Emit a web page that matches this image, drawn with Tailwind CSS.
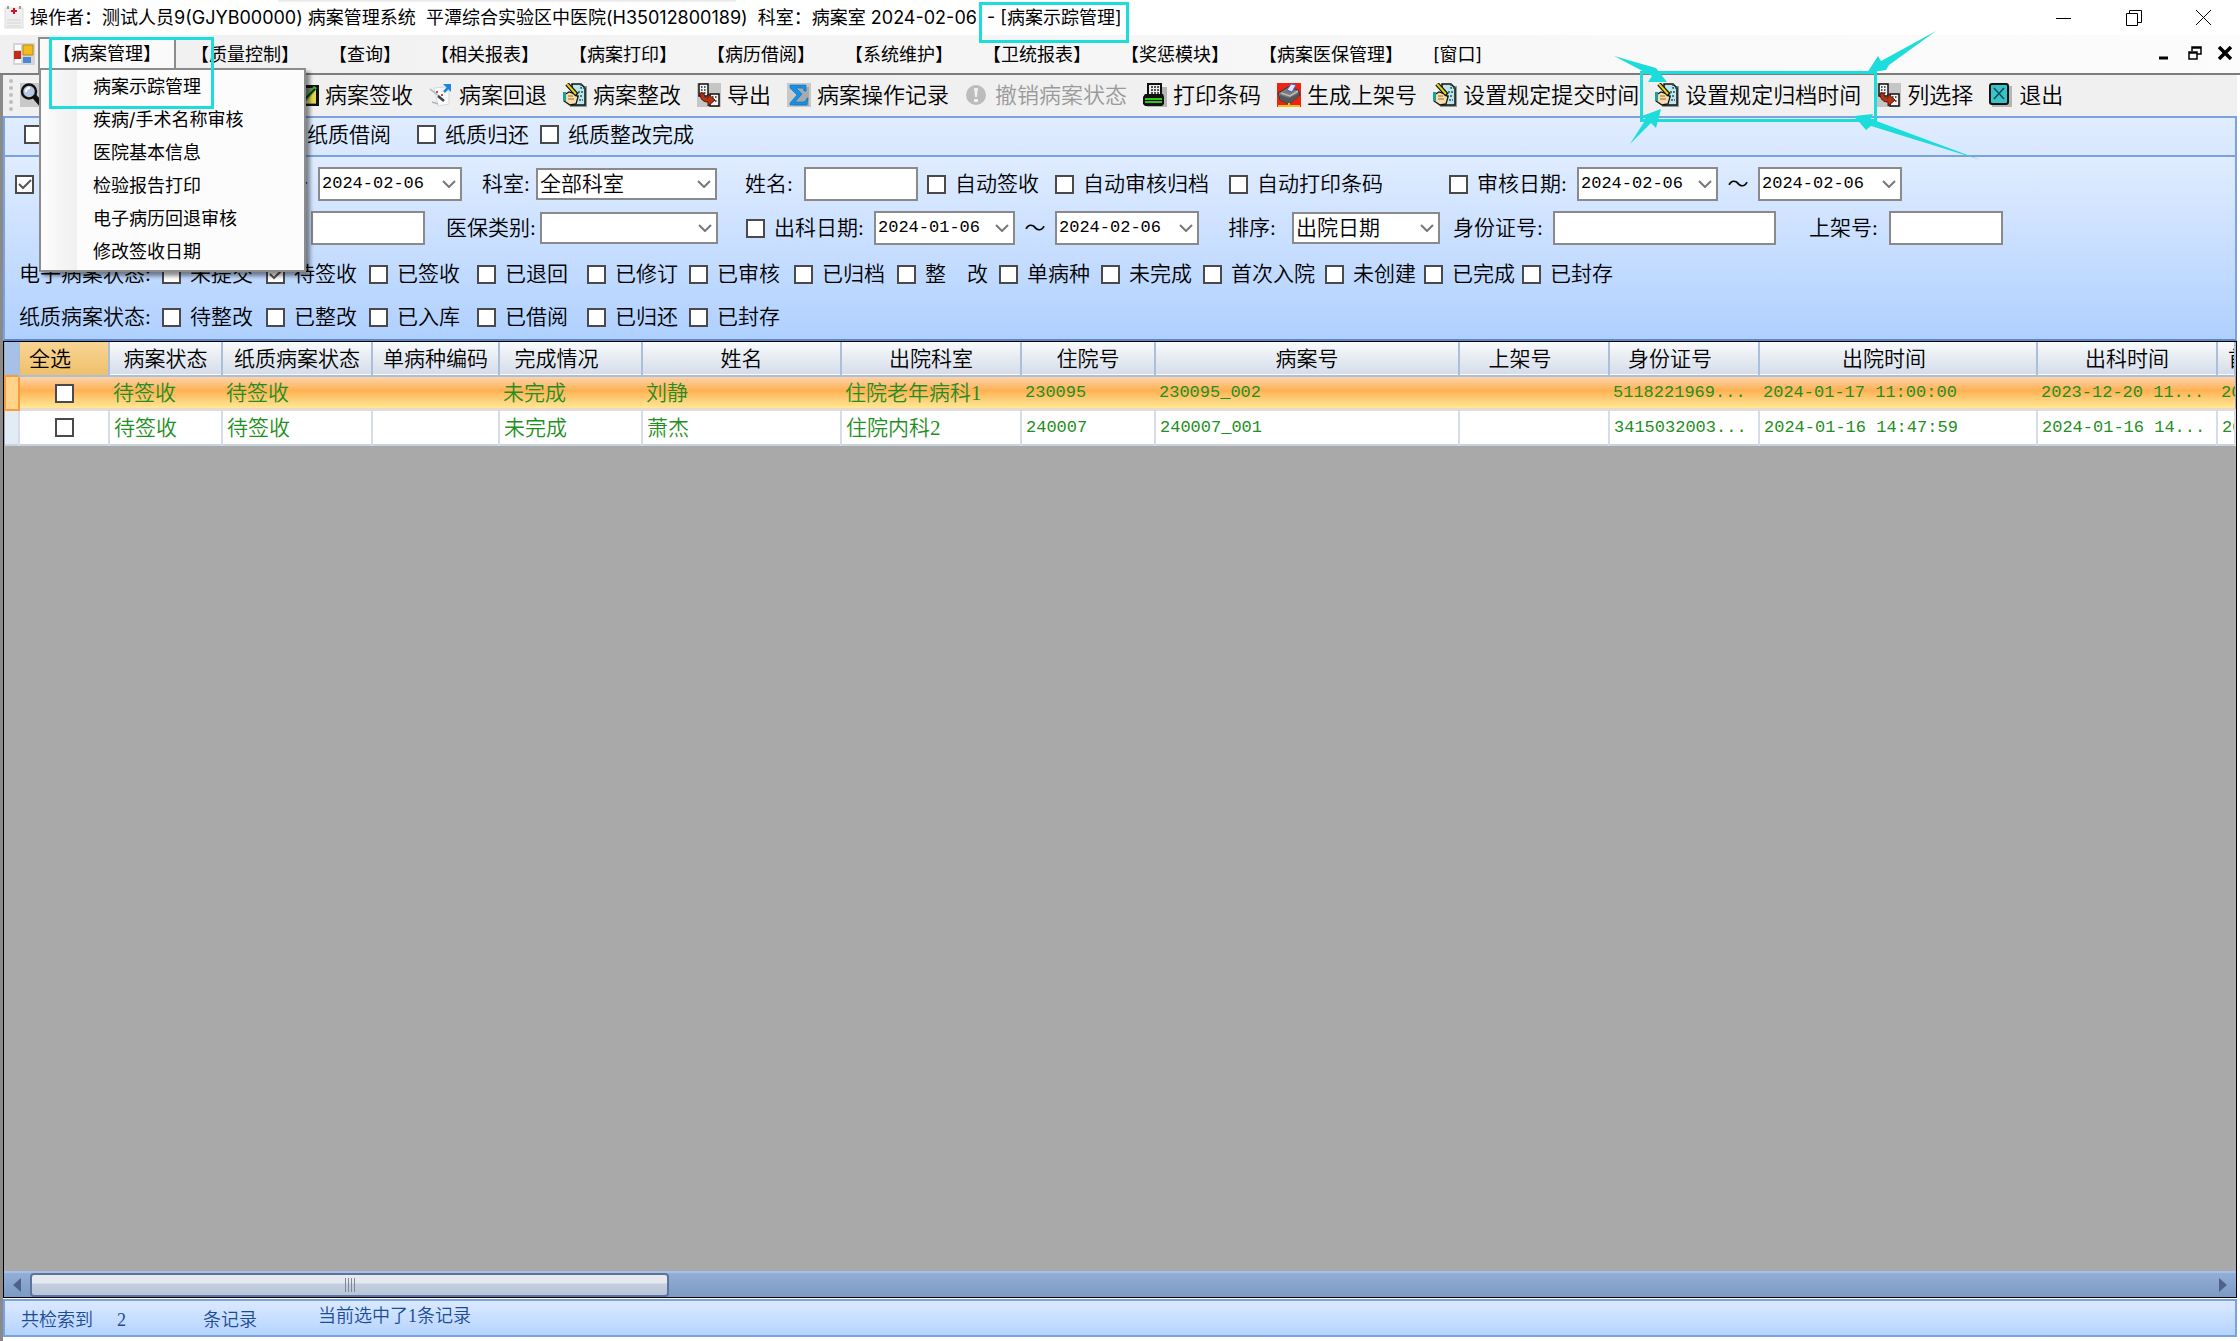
<!DOCTYPE html>
<html lang="zh-CN">
<head>
<meta charset="utf-8">
<title>病案管理系统</title>
<script src="https://cdn.jsdelivr.net/npm/@tailwindcss/browser@4"></script>
</head>
<body class="relative flex min-h-screen flex-col overflow-hidden bg-white font-['Inter','Noto_Sans_CJK_SC',sans-serif] text-lg leading-6 text-black">

<svg class="hidden">
  <symbol id="i-search" viewBox="0 0 24 24"><path fill="#c8c8c8" d="M0 0h24v24H0z"/><path stroke="#111" stroke-width="5" stroke-linecap="round" d="M14 13l7 8"/><circle cx="9" cy="8.500" r="7" fill="#b8c8e4" stroke="#111" stroke-width="2.500"/><path d="M6 9c0-3 2-4 4-4" fill="none" stroke="#fff" stroke-width="2"/></symbol>
  <symbol id="i-sign" viewBox="0 0 24 24"><path fill="#111" d="M1 2h23v21H1z"/><path fill="#8a8a6a" d="M3 5h18v16H3z"/><path fill="#e6d84a" d="M10 20 21 7v13z"/><path fill="#3fa63a" d="M9 14 19 3l3 2-11 13z"/><path d="M8 18 20 6" fill="none" stroke="#111" stroke-width="1.5"/></symbol>
  <symbol id="i-return" viewBox="0 0 24 24"><path fill="#f8fafc" stroke="#d5d9e0" d="M5 5l11-1 4 4v13l-11 2z"/><path d="M1 6l9 7M3 19l6 2" stroke="#b5b5b5" stroke-width="1.5"/><path fill="#d44" d="M7 8h2v2H7zM12 11h2v2h-2z"/><path d="M15 9l4-4" stroke="#1d86e0" stroke-width="2.500"/><path fill="#1d86e0" d="M14 1h8v8z"/><path d="M9 13l6 5" stroke="#444" stroke-width="2.500"/></symbol>
  <symbol id="i-edit" viewBox="0 0 24 24"><path fill="#8d9b9b" d="M11 3h13v21H7v-5z"/><path fill="#bfe6ec" stroke="#111" stroke-width="1.5" d="M9 1h9l4 4v17H9z"/><path d="M18 1v4h4M15 9h5M14 13h6M16 17h4" fill="none" stroke="#1b5c60" stroke-width="1.5" stroke-dasharray="2 1"/><path fill="#f6dcae" stroke="#111" stroke-width="1.3" d="M1 12l5-3 6 2 3 3-2 7-6 1-6-4z"/><path d="M5 13h5M5 16h6" stroke="#a06a20"/><path d="M4 1l10 11" stroke="#111" stroke-width="4.5"/><path d="M4 1l9 10" stroke="#e6d21c" stroke-width="2"/><path fill="#18a2a0" d="M0 9h3v9H0z"/></symbol>
  <symbol id="i-export" viewBox="0 0 24 24"><path fill="#c6c6c6" d="M0 0h24v24H0z"/><path fill="#f4f4f4" stroke="#111" stroke-width="1.5" d="M2 1h9v12H2zM13 11h9v12h-9z"/><path stroke="#222" stroke-dasharray="1.5 1.5" stroke-width="1.5" d="M4 4h6M4 7h6M4 10h6M15 14h6M18 18h3"/><path fill="#b8300f" stroke="#4a1608" d="M3 10c0 7 4 9 8 9v4l7-6-7-6v4c-3 0-4-2-4-5z"/></symbol>
  <symbol id="i-sigma" viewBox="0 0 24 24"><path fill="#c8c8c8" d="M0 0h24v24H0z"/><path fill="#858b90" d="M5 4h17v19H6l6-9z" opacity=".5"/><path fill="#1590e6" stroke="#0d6cb8" stroke-width=".6" d="M3 2h16v6h-2c0-2-1-3-3-3H9l6 6-7 8h7c3 0 4-1 5-4h1l-1 7H3v-2l7-8-7-7z"/></symbol>
  <symbol id="i-undo" viewBox="0 0 24 24"><circle cx="11" cy="12" r="10" fill="#bcbcbc"/><path fill="#f0f0f0" d="M9 5h4l-1 9h-2zM9 16h4v3H9z"/></symbol>
  <symbol id="i-print" viewBox="0 0 24 24"><path fill="#b5b5b5" d="M4 4h20v20H4z"/><path fill="#eee" stroke="#111" stroke-width="2" d="M5 1h13v12H5z"/><path d="M8 4h8M8 7h8M8 10h8" stroke="#222" stroke-width="1.5" stroke-dasharray="2 1"/><path fill="#111" d="M2 11h18l1 3v7l-2 2H2l-2-2v-7z"/><path fill="#35c020" d="M2 15h17v2H2zM2 18h17v2H2z"/></symbol>
  <symbol id="i-shelf" viewBox="0 0 24 24"><path fill="#ee2412" d="M0 0h24v24H0z"/><path fill="#77797b" stroke="#333" d="M1 10l10-6 10 3 2 5-11 9-9-4z"/><path fill="#55585a" d="M3 12l9 3 10-5v3l-10 8-9-4z"/><path d="M4 10l9 3 8-5" fill="none" stroke="#bbb" stroke-width="1.500"/><path fill="#dfe6ff" stroke="#5560b0" d="M10 7l4-6 5 1-4 7z"/><path d="M1 23h22M12 20v3" stroke="#e9c21a" stroke-width="2"/></symbol>
  <symbol id="i-exit" viewBox="0 0 24 24"><path fill="#b5b5b5" d="M3 3h20v21H3z"/><rect x="1" y="1" width="18" height="20" rx="2" fill="#37c3c8" stroke="#111" stroke-width="2"/><path d="M5 5l10 11M15 5L5 16" stroke="#114b55" stroke-width="1.500"/></symbol>
  <symbol id="i-down" viewBox="0 0 14 8"><path d="M1 1l6 6 6-6" fill="none" stroke="#777" stroke-width="2"/></symbol>
  <symbol id="i-check" viewBox="0 0 19 19"><path d="M4 9l4 4 8-8" fill="none" stroke="#555" stroke-width="2"/></symbol>
</svg>

<!-- title bar -->
<header class="relative flex h-[35px] shrink-0 items-center pl-1">
  <div class="absolute top-0 left-[278px] h-[3px] w-[458px] rounded-b bg-linear-to-b from-neutral-200 to-white"></div>
  <svg class="h-6 w-5 shrink-0" viewBox="0 0 20 24"><path fill="#efefef" stroke="#ddd" d="M1 2h18v20H1z"/><path stroke="#d5d5d5" d="M3 14h14M3 17h14M3 20h14"/><path stroke="#999" stroke-width="2" d="M4 0v3M16 0v3"/><path stroke="#d0102a" stroke-width="2" d="M10 2v6M7 5h6"/></svg>
  <h1 class="ml-1.5 whitespace-pre">操作者：测试人员9(GJYB00000) 病案管理系统  平潭综合实验区中医院(H35012800189)  科室：病案室 2024-02-06  - [病案示踪管理]</h1>
  <div class="ml-auto flex items-center pr-7">
    <button aria-label="最小化" class="mr-[54px]"><svg class="size-4" viewBox="0 0 16 16"><path stroke="#000" d="M0 8.500h15"/></svg></button>
    <button aria-label="还原" class="mr-[54px]"><svg class="size-4" viewBox="0 0 16 16" fill="none" stroke="#000"><path d="M.5 3.500h11v12H.5zM3.500 3V.5h12v12H12"/></svg></button>
    <button aria-label="关闭"><svg class="size-4" viewBox="0 0 16 16" stroke="#000"><path d="M0 0l15 15M15 0L0 15"/></svg></button>
  </div>
</header>

<!-- menu bar -->
<nav class="relative flex h-10 shrink-0 items-stretch border-b-2 border-[#7c7c7c] bg-linear-to-r from-[#f0f0f0] to-[#fcfcfc] pt-px pl-[13px] whitespace-nowrap">
  <svg class="mt-[7px] mr-[3px] size-[22px] shrink-0" viewBox="0 0 22 22"><path fill="#d4d4d4" d="M0 0h22v22H0z"/><path fill="#fff" d="M2 2h6v5H2zM2 16h6v4H2z"/><path fill="#c22a1a" d="M1 8h7v8H1z"/><path fill="#f2bc1c" stroke="#b98a10" d="M10 2h10v10H10z"/><path fill="#4a86dc" d="M10 14h8v6h-8z"/></svg>
  <button class="mt-px border-2 border-b-0 border-[#8c8c8c] bg-[#fafafa] px-[13px] pb-1">【病案管理】</button>
  <button class="px-[15px]">【质量控制】</button>
  <button class="px-[15px]">【查询】</button>
  <button class="px-[15px]">【相关报表】</button>
  <button class="px-[15px]">【病案打印】</button>
  <button class="px-[15px]">【病历借阅】</button>
  <button class="px-[15px]">【系统维护】</button>
  <button class="px-[15px]">【卫统报表】</button>
  <button class="px-[15px]">【奖惩模块】</button>
  <button class="px-[15px]">【病案医保管理】</button>
  <button class="px-[15px]">[窗口]</button>
  <div class="ml-auto flex items-center gap-4 pr-2 pb-1">
    <button aria-label="最小化子窗口"><svg class="size-[14px]" viewBox="0 0 14 14"><path stroke="#000" stroke-width="3" d="M1 12h9"/></svg></button>
    <button aria-label="还原子窗口"><svg class="size-[14px]" viewBox="0 0 14 14" fill="none" stroke="#000" stroke-width="1.500"><path d="M1 6h8v7H1zM4 5V1h9v7H9M4 2h9M1 7h8"/></svg></button>
    <button aria-label="关闭子窗口"><svg class="size-[14px]" viewBox="0 0 14 14" stroke="#000" stroke-width="3.500"><path d="M1 1l12 12M13 1L1 13"/></svg></button>
  </div>
  <ul class="absolute top-[33px] left-[39px] z-10 w-[267px] border-2 border-[#8c8c8c] bg-[#fcfcfc] bg-linear-to-r from-[#fcfcfc] to-[#f0f0f0] bg-[length:36px_100%] bg-no-repeat pb-0.5 shadow-[4px_4px_4px_rgba(0,0,0,0.45)]">
    <li><button class="h-[33px] w-full pl-[52px] text-left">病案示踪管理</button></li>
    <li><button class="h-[33px] w-full pl-[52px] text-left">疾病/手术名称审核</button></li>
    <li><button class="h-[33px] w-full pl-[52px] text-left">医院基本信息</button></li>
    <li><button class="h-[33px] w-full pl-[52px] text-left">检验报告打印</button></li>
    <li><button class="h-[33px] w-full pl-[52px] text-left">电子病历回退审核</button></li>
    <li><button class="h-[33px] w-full pl-[52px] text-left">修改签收日期</button></li>
  </ul>
</nav>

<main class="mr-[3px] flex grow flex-col border-l-[3px] border-[#8a8a8a] pb-1">
  <!-- toolbar -->
  <div class="flex h-[41px] shrink-0 items-center gap-4 bg-[#f0f0f0] pb-0.5 pl-[6px] text-[22px] font-[350] whitespace-nowrap">
    <div class="-mr-[9px] h-8 border-l-4 border-dotted border-[#bdbdbd]"></div>
    <button aria-label="检索" class="mr-[235px]"><svg class="size-6"><use href="#i-search"/></svg></button>
    <button class="flex items-center gap-1.5"><svg class="size-6"><use href="#i-sign"/></svg>病案签收</button>
    <button class="flex items-center gap-1.5"><svg class="size-6"><use href="#i-return"/></svg>病案回退</button>
    <button class="flex items-center gap-1.5"><svg class="size-6"><use href="#i-edit"/></svg>病案整改</button>
    <button class="flex items-center gap-1.5"><svg class="size-6"><use href="#i-export"/></svg>导出</button>
    <button class="flex items-center gap-1.5"><svg class="size-6"><use href="#i-sigma"/></svg>病案操作记录</button>
    <button disabled class="flex items-center gap-1.5 text-[#9a9a9a]"><svg class="size-6"><use href="#i-undo"/></svg>撤销病案状态</button>
    <button class="flex items-center gap-1.5"><svg class="size-6"><use href="#i-print"/></svg>打印条码</button>
    <button class="flex items-center gap-1.5"><svg class="size-6"><use href="#i-shelf"/></svg>生成上架号</button>
    <button class="flex items-center gap-1.5"><svg class="size-6"><use href="#i-edit"/></svg>设置规定提交时间</button>
    <button class="flex items-center gap-1.5"><svg class="size-6"><use href="#i-edit"/></svg>设置规定归档时间</button>
    <button class="flex items-center gap-1.5"><svg class="size-6"><use href="#i-export"/></svg>列选择</button>
    <button class="flex items-center gap-1.5"><svg class="size-6"><use href="#i-exit"/></svg>退出</button>
  </div>

  <div class="flex grow flex-col font-['Liberation_Serif','Noto_Sans_CJK_SC',serif] text-[21px] font-[350] whitespace-nowrap">
    <!-- paper record options -->
    <div class="flex h-[41px] shrink-0 items-center border-2 border-[#7ba2dc] bg-linear-to-b from-[#e0ecff] to-[#d8e8ff] pb-1 pl-[19px]">
      <label class="flex w-[393px] items-center justify-between"><input type="checkbox" class="size-[19px] appearance-none border-2 border-[#4a4a4a] bg-white"><span class="mr-[26px]">纸质借阅</span></label>
      <label class="flex w-[123px] items-center gap-[9px]"><input type="checkbox" class="size-[19px] shrink-0 appearance-none border-2 border-[#4a4a4a] bg-white">纸质归还</label>
      <label class="flex items-center gap-[9px]"><input type="checkbox" class="size-[19px] shrink-0 appearance-none border-2 border-[#4a4a4a] bg-white">纸质整改完成</label>
    </div>

    <!-- filters -->
    <div class="flex h-[184px] shrink-0 flex-col border-2 border-t-0 border-x-[#7ba2dc] border-b-[#5d86c4] bg-linear-to-b from-[#e0ecff] to-[#afd0ff]">
      <div class="flex h-[54px] shrink-0 items-center pl-[10px]">
        <span class="grid size-[19px]"><input type="checkbox" checked aria-label="出院日期" class="col-start-1 row-start-1 size-[19px] appearance-none border-2 border-[#4a4a4a] bg-white"><svg class="pointer-events-none col-start-1 row-start-1 size-[19px]"><use href="#i-check"/></svg></span>
        <span class="ml-[253px] w-[31px]">～</span>
        <span class="grid w-36 items-center"><select aria-label="出院日期止" class="col-start-1 row-start-1 h-[34px] appearance-none border-2 border-[#8a8a8a] bg-white pl-0.5 font-['Liberation_Mono',monospace] text-[17px]"><option>2024-02-06</option></select><svg class="pointer-events-none col-start-1 row-start-1 mr-1.5 h-2 w-3.5 justify-self-end"><use href="#i-down"/></svg></span>
        <label for="dept" class="ml-5 w-[54px]">科室:</label>
        <span class="grid w-[181px] items-center"><select id="dept" class="col-start-1 row-start-1 h-8 appearance-none border-2 border-[#8a8a8a] bg-white pl-0.5 leading-7"><option>全部科室</option></select><svg class="pointer-events-none col-start-1 row-start-1 mr-1.5 h-2 w-3.5 justify-self-end"><use href="#i-down"/></svg></span>
        <label for="name" class="ml-7 w-[59px]">姓名:</label>
        <input id="name" type="text" class="mr-[9px] h-[34px] w-[114px] border-2 border-[#8a8a8a] bg-white">
        <label class="flex w-32 items-center gap-[9px]"><input type="checkbox" class="size-[19px] shrink-0 appearance-none border-2 border-[#4a4a4a] bg-white">自动签收</label>
        <label class="flex w-[174px] items-center gap-[9px]"><input type="checkbox" class="size-[19px] shrink-0 appearance-none border-2 border-[#4a4a4a] bg-white">自动审核归档</label>
        <label class="flex w-[220px] items-center gap-[9px]"><input type="checkbox" class="size-[19px] shrink-0 appearance-none border-2 border-[#4a4a4a] bg-white">自动打印条码</label>
        <label class="flex w-32 items-center gap-[9px]"><input type="checkbox" class="size-[19px] shrink-0 appearance-none border-2 border-[#4a4a4a] bg-white">审核日期:</label>
        <span class="grid w-[141px] items-center"><select aria-label="审核日期起" class="col-start-1 row-start-1 h-[34px] appearance-none border-2 border-[#8a8a8a] bg-white pl-0.5 font-['Liberation_Mono',monospace] text-[17px]"><option>2024-02-06</option></select><svg class="pointer-events-none col-start-1 row-start-1 mr-1.5 h-2 w-3.5 justify-self-end"><use href="#i-down"/></svg></span>
        <span class="w-10 text-center">～</span>
        <span class="grid w-36 items-center"><select aria-label="审核日期止" class="col-start-1 row-start-1 h-[34px] appearance-none border-2 border-[#8a8a8a] bg-white pl-0.5 font-['Liberation_Mono',monospace] text-[17px]"><option>2024-02-06</option></select><svg class="pointer-events-none col-start-1 row-start-1 mr-1.5 h-2 w-3.5 justify-self-end"><use href="#i-down"/></svg></span>
      </div>
      <div class="flex h-[34px] shrink-0 items-center pl-[306px]">
        <input type="text" aria-label="住院号" class="h-[34px] w-[114px] border-2 border-[#8a8a8a] bg-white">
        <label for="insurance" class="ml-[21px] w-[94px]">医保类别:</label>
        <span class="grid w-[178px] items-center"><select id="insurance" class="col-start-1 row-start-1 h-8 appearance-none border-2 border-[#8a8a8a] bg-white"><option></option></select><svg class="pointer-events-none col-start-1 row-start-1 mr-1.5 h-2 w-3.5 justify-self-end"><use href="#i-down"/></svg></span>
        <label class="ml-7 flex w-32 items-center gap-[9px]"><input type="checkbox" class="size-[19px] shrink-0 appearance-none border-2 border-[#4a4a4a] bg-white">出科日期:</label>
        <span class="grid w-[141px] items-center"><select aria-label="出科日期起" class="col-start-1 row-start-1 h-[34px] appearance-none border-2 border-[#8a8a8a] bg-white pl-0.5 font-['Liberation_Mono',monospace] text-[17px]"><option>2024-01-06</option></select><svg class="pointer-events-none col-start-1 row-start-1 mr-1.5 h-2 w-3.5 justify-self-end"><use href="#i-down"/></svg></span>
        <span class="w-10 text-center">～</span>
        <span class="grid w-36 items-center"><select aria-label="出科日期止" class="col-start-1 row-start-1 h-[34px] appearance-none border-2 border-[#8a8a8a] bg-white pl-0.5 font-['Liberation_Mono',monospace] text-[17px]"><option>2024-02-06</option></select><svg class="pointer-events-none col-start-1 row-start-1 mr-1.5 h-2 w-3.5 justify-self-end"><use href="#i-down"/></svg></span>
        <label for="sort" class="ml-[29px] w-16">排序:</label>
        <span class="grid w-[148px] items-center"><select id="sort" class="col-start-1 row-start-1 h-8 appearance-none border-2 border-[#8a8a8a] bg-white pl-0.5 leading-7"><option>出院日期</option></select><svg class="pointer-events-none col-start-1 row-start-1 mr-1.5 h-2 w-3.5 justify-self-end"><use href="#i-down"/></svg></span>
        <label for="idno" class="ml-[13px] w-[100px]">身份证号:</label>
        <input id="idno" type="text" class="h-[34px] w-[223px] border-2 border-[#8a8a8a] bg-white">
        <label for="shelf" class="ml-[33px] w-20">上架号:</label>
        <input id="shelf" type="text" class="h-[34px] w-[114px] border-2 border-[#8a8a8a] bg-white">
      </div>
      <div role="group" aria-label="电子病案状态" class="flex h-[58px] shrink-0 items-center pl-[14px]">
        <span class="w-[143px]">电子病案状态:</span>
        <label class="flex w-[104px] items-center gap-[9px]"><input type="checkbox" class="size-[19px] shrink-0 appearance-none border-2 border-[#4a4a4a] bg-white">未提交</label>
        <label class="flex w-[103px] items-center gap-[9px]"><span class="grid size-[19px]"><input type="checkbox" checked class="col-start-1 row-start-1 size-[19px] appearance-none border-2 border-[#4a4a4a] bg-white"><svg class="pointer-events-none col-start-1 row-start-1 size-[19px]"><use href="#i-check"/></svg></span>待签收</label>
        <label class="flex w-[108px] items-center gap-[9px]"><input type="checkbox" class="size-[19px] shrink-0 appearance-none border-2 border-[#4a4a4a] bg-white">已签收</label>
        <label class="flex w-[110px] items-center gap-[9px]"><input type="checkbox" class="size-[19px] shrink-0 appearance-none border-2 border-[#4a4a4a] bg-white">已退回</label>
        <label class="flex w-[102px] items-center gap-[9px]"><input type="checkbox" class="size-[19px] shrink-0 appearance-none border-2 border-[#4a4a4a] bg-white">已修订</label>
        <label class="flex w-[105px] items-center gap-[9px]"><input type="checkbox" class="size-[19px] shrink-0 appearance-none border-2 border-[#4a4a4a] bg-white">已审核</label>
        <label class="flex w-[103px] items-center gap-[9px]"><input type="checkbox" class="size-[19px] shrink-0 appearance-none border-2 border-[#4a4a4a] bg-white">已归档</label>
        <label class="flex w-[102px] items-center gap-[9px]"><input type="checkbox" class="size-[19px] shrink-0 appearance-none border-2 border-[#4a4a4a] bg-white">整　改</label>
        <label class="flex w-[102px] items-center gap-[9px]"><input type="checkbox" class="size-[19px] shrink-0 appearance-none border-2 border-[#4a4a4a] bg-white">单病种</label>
        <label class="flex w-[102px] items-center gap-[9px]"><input type="checkbox" class="size-[19px] shrink-0 appearance-none border-2 border-[#4a4a4a] bg-white">未完成</label>
        <label class="flex w-[122px] items-center gap-[9px]"><input type="checkbox" class="size-[19px] shrink-0 appearance-none border-2 border-[#4a4a4a] bg-white">首次入院</label>
        <label class="flex w-[99px] items-center gap-[9px]"><input type="checkbox" class="size-[19px] shrink-0 appearance-none border-2 border-[#4a4a4a] bg-white">未创建</label>
        <label class="flex w-[98px] items-center gap-[9px]"><input type="checkbox" class="size-[19px] shrink-0 appearance-none border-2 border-[#4a4a4a] bg-white">已完成</label>
        <label class="flex items-center gap-[9px]"><input type="checkbox" class="size-[19px] shrink-0 appearance-none border-2 border-[#4a4a4a] bg-white">已封存</label>
      </div>
      <div role="group" aria-label="纸质病案状态" class="flex h-7 shrink-0 items-center pl-[14px]">
        <span class="w-[143px]">纸质病案状态:</span>
        <label class="flex w-[104px] items-center gap-[9px]"><input type="checkbox" class="size-[19px] shrink-0 appearance-none border-2 border-[#4a4a4a] bg-white">待整改</label>
        <label class="flex w-[103px] items-center gap-[9px]"><input type="checkbox" class="size-[19px] shrink-0 appearance-none border-2 border-[#4a4a4a] bg-white">已整改</label>
        <label class="flex w-[108px] items-center gap-[9px]"><input type="checkbox" class="size-[19px] shrink-0 appearance-none border-2 border-[#4a4a4a] bg-white">已入库</label>
        <label class="flex w-[110px] items-center gap-[9px]"><input type="checkbox" class="size-[19px] shrink-0 appearance-none border-2 border-[#4a4a4a] bg-white">已借阅</label>
        <label class="flex w-[102px] items-center gap-[9px]"><input type="checkbox" class="size-[19px] shrink-0 appearance-none border-2 border-[#4a4a4a] bg-white">已归还</label>
        <label class="flex items-center gap-[9px]"><input type="checkbox" class="size-[19px] shrink-0 appearance-none border-2 border-[#4a4a4a] bg-white">已封存</label>
      </div>
    </div>

    <!-- record grid -->
    <div class="flex grow flex-col border border-black bg-[#a9a9a9]">
      <table class="w-full table-fixed border-collapse">
        <colgroup><col class="w-[14px]"><col class="w-[90px]"><col class="w-[113px]"><col class="w-[150px]"><col class="w-[127px]"><col class="w-[143px]"><col class="w-[199px]"><col class="w-[180px]"><col class="w-[134px]"><col class="w-[304px]"><col class="w-[150px]"><col class="w-[150px]"><col class="w-[278px]"><col class="w-[180px]"><col></colgroup>
        <thead>
          <tr class="h-[34px] border-b-2 border-[#a9bfdb] bg-linear-to-b from-[#f8fbfc] to-[#d6dde9] [&>th]:border-r-2 [&>th]:border-[#a9bfdb] [&>th]:p-0 [&>th]:font-[350]">
            <th class="bg-[#a6c1e8]"></th>
            <th class="bg-linear-to-b from-[#f8d594] to-[#efc06a]"><span class="pr-7">全选</span></th>
            <th>病案状态</th><th>纸质病案状态</th><th>单病种编码</th>
            <th><span class="pr-7">完成情况</span></th>
            <th>姓名</th><th>出院科室</th><th>住院号</th><th>病案号</th>
            <th><span class="pr-7">上架号</span></th>
            <th><span class="pr-7">身份证号</span></th>
            <th><span class="pr-7">出院时间</span></th>
            <th>出科时间</th>
            <th class="overflow-hidden text-left"><span class="pl-2.5">首页时间</span></th>
          </tr>
        </thead>
        <tbody class="text-[#1f8f23] [&_td]:overflow-hidden [&_td]:py-0 [&_td]:pr-0 [&_td]:pl-1">
          <tr class="h-[34px] border-b-2 border-[#dcdde6] bg-linear-to-b from-[#fcd5ae] from-0% via-[#ffb152] via-45% to-[#ffe996] to-100%">
            <td class="border-2 border-[#f79b3c] bg-[#ffd38a]"></td>
            <td><input type="checkbox" aria-label="选择 刘静" class="mr-1 block size-[19px] justify-self-center appearance-none border-2 border-[#4a4a4a] bg-white"></td>
            <td>待签收</td><td>待签收</td><td></td><td>未完成</td><td>刘静</td><td>住院老年病科1</td>
            <td class="font-['Liberation_Mono',monospace] text-[17px]">230095</td>
            <td class="font-['Liberation_Mono',monospace] text-[17px]">230095_002</td>
            <td></td>
            <td class="font-['Liberation_Mono',monospace] text-[17px]">5118221969...</td>
            <td class="font-['Liberation_Mono',monospace] text-[17px]">2024-01-17 11:00:00</td>
            <td class="font-['Liberation_Mono',monospace] text-[17px]">2023-12-20 11...</td>
            <td class="font-['Liberation_Mono',monospace] text-[17px]">20</td>
          </tr>
          <tr class="h-[35px] border-b-2 border-[#c9d3de] bg-white [&>td]:border-r-2 [&>td]:border-[#d6dcea]">
            <td class="bg-[#e3ebf7]"></td>
            <td><input type="checkbox" aria-label="选择 萧杰" class="mr-1 block size-[19px] justify-self-center appearance-none border-2 border-[#4a4a4a] bg-white"></td>
            <td>待签收</td><td>待签收</td><td></td><td>未完成</td><td>萧杰</td><td>住院内科2</td>
            <td class="font-['Liberation_Mono',monospace] text-[17px]">240007</td>
            <td class="font-['Liberation_Mono',monospace] text-[17px]">240007_001</td>
            <td></td>
            <td class="font-['Liberation_Mono',monospace] text-[17px]">3415032003...</td>
            <td class="font-['Liberation_Mono',monospace] text-[17px]">2024-01-16 14:47:59</td>
            <td class="font-['Liberation_Mono',monospace] text-[17px]">2024-01-16 14...</td>
            <td class="font-['Liberation_Mono',monospace] text-[17px]">20</td>
          </tr>
        </tbody>
      </table>
      <!-- horizontal scroll bar -->
      <div class="mt-auto flex h-[26px] items-center border-t-2 border-[#a5c1ea] bg-linear-to-b from-[#93aed6] to-[#7b9ac4] pr-[9px] pl-[9px]">
        <svg class="mr-[9px] h-[14px] w-2" viewBox="0 0 8 14"><path fill="#51618f" d="M8 0v14L0 7z"/></svg>
        <div class="flex h-6 w-[639px] items-center justify-center gap-0.5 rounded-sm border-2 border-[#5f719f] bg-linear-to-b from-[#e6e9ee] from-40% via-[#c3cfdf] via-45% to-[#b9c6d8]">
          <i class="h-[14px] w-px bg-[#7d8896]"></i><i class="h-[14px] w-px bg-[#7d8896]"></i><i class="h-[14px] w-px bg-[#7d8896]"></i><i class="h-[14px] w-px bg-[#7d8896]"></i>
        </div>
        <svg class="ml-auto h-[14px] w-2" viewBox="0 0 8 14"><path fill="#51618f" d="M0 0v14l8-7z"/></svg>
      </div>
    </div>

    <!-- status bar -->
    <footer class="mt-px flex h-[38px] shrink-0 items-center border-2 border-[#79a3de] bg-linear-to-b from-[#dbe9ff] to-[#b5d4ff] pl-4 text-lg text-[#1d4c96]">
      <span class="w-24 pt-1">共检索到</span><span class="w-[86px] pt-1">2</span><span class="w-[115px] pt-1">条记录</span><span class="pb-1">当前选中了1条记录</span>
    </footer>
  </div>
</main>

<!-- highlight marks over the window -->
<svg class="pointer-events-none absolute top-0 left-0 z-20 h-[180px] w-[2000px]" fill="none" stroke="#1cdcdc" stroke-width="3">
  <path d="M50.500 38.500h162v69h-162zM980.500 3.500h147v38h-147zM1641.500 72.500h234v48h-234z"/>
  <g fill="#1cdcdc" stroke="none">
    <path d="M1614 56l42 12 11 14-19 0 4-6z"/>
    <path d="M1630 144l16-25-4-3 19-7-5 19-5-5z"/>
    <path d="M1936 31l-47 34-3 5-19 3 11-17 3 5z"/>
    <path d="M1981 160l-110-34-5 4-12-14 19-2-2 5z"/>
  </g>
</svg>
</body>
</html>
